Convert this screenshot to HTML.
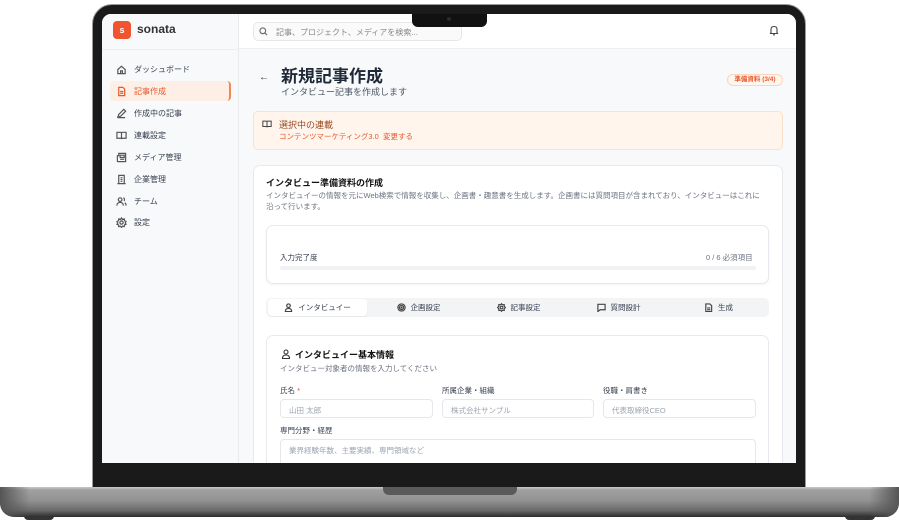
<!DOCTYPE html>
<html><head><meta charset="utf-8"><style>
*{box-sizing:border-box;margin:0;padding:0}
body{width:899px;height:525px;background:#fff;position:relative;overflow:hidden;font-family:"Liberation Sans","Noto Sans CJK JP",sans-serif;color:#1f2937}
.abs{position:absolute}
.frame{left:92px;top:4px;width:714px;height:486px;background:#1a1a1a;border-radius:20px 20px 0 0;border:1px solid #9a9a9a}
.screen{left:102px;top:14px;width:694px;height:449px;background:#f8f9fb;overflow:hidden;border-radius:9px 9px 0 0}
.notch{left:412px;top:14px;width:75px;height:13px;background:#111;border-radius:0 0 6px 6px;z-index:5}
.base{left:0;top:487px;width:899px;height:30px;border-radius:2px 2px 14px 14px;background:linear-gradient(#c9c9c9 0,#a0a0a0 3px,#929292 45%,#6a6a6a 78%,#2d2d2d 100%)}
.base:before{content:"";position:absolute;left:0;top:0;width:30px;height:30px;border-radius:0 0 0 14px;background:linear-gradient(90deg,#555,rgba(0,0,0,0))}
.base:after{content:"";position:absolute;right:0;top:0;width:30px;height:30px;border-radius:0 0 14px 0;background:linear-gradient(270deg,#555,rgba(0,0,0,0))}
.lip{left:383px;top:487px;width:134px;height:8px;background:#5a5a5a;border-radius:0 0 6px 6px}
.foot{top:516px;width:30px;height:4px;background:#333;border-radius:0 0 4px 4px}
.side{left:0;top:0;width:137px;height:449px;background:#f8f9fb;border-right:1px solid #e8eaee}
.hdr{left:137px;top:0;width:557px;height:35px;background:#fff;border-bottom:1px solid #eceef1}
.nav{position:absolute;left:14px;font-size:8px;color:#374151;display:flex;align-items:center;gap:7px}
.nav svg{width:11px;height:11px;stroke:#555;fill:none;stroke-width:1.3}
.card{background:#fff;border:1px solid #e7e9ed;border-radius:7px;position:absolute}
.in{position:absolute;height:19px;border:1px solid #e5e7eb;border-radius:4px;background:#fff;font-size:7.5px;color:#9ca3af;padding:5px 8px}
.lbl{position:absolute;font-size:7.5px;color:#374151}
.tab{position:absolute;top:0;height:18px;font-size:7.5px;color:#374151;display:flex;align-items:center;justify-content:center;gap:5px}
.tab svg{width:9px;height:9px;stroke:#444;fill:none;stroke-width:1.3}
</style></head><body>
<div class="abs frame"></div>
<div class="abs screen">
  <div class="abs side">
    <div class="abs" style="left:11px;top:7px;width:18px;height:18px;border-radius:4px;background:#f0552f;color:#fff;font-size:9px;font-weight:bold;text-align:center;line-height:18px">s</div>
    <div class="abs" style="left:35px;top:8px;font-size:12px;font-weight:bold;color:#333">sonata</div>
    <div class="abs" style="left:0;top:35px;width:137px;border-top:1px solid #eceef1"></div>
    <div class="abs" style="left:8px;top:67px;width:121px;height:20px;background:#fdeee6;border-radius:4px;border-right:2px solid #f0884f"></div>
    <div class="nav" style="top:50px"><svg viewBox="0 0 12 12"><path d="M2 6L6 2.5 10 6V10.5H2Z M5 10.5V7.5H7V10.5"/></svg>ダッシュボード</div>
    <div class="nav" style="top:72px;color:#e8572a"><svg viewBox="0 0 12 12" style="stroke:#e8572a"><path d="M3 1.5H7.5L9.5 3.5V10.5H3Z M4.5 6H8 M4.5 8H8"/></svg>記事作成</div>
    <div class="nav" style="top:94px"><svg viewBox="0 0 12 12"><path d="M2 10L3 7 8.5 1.5 10.5 3.5 5 9Z M2 10.5H10"/></svg>作成中の記事</div>
    <div class="nav" style="top:116px"><svg viewBox="0 0 12 12"><path d="M1 2.5H5Q6 2.5 6 3.5V10Q6 9 5 9H1Z M11 2.5H7Q6 2.5 6 3.5V10Q6 9 7 9H11Z"/></svg>連載設定</div>
    <div class="nav" style="top:138px"><svg viewBox="0 0 12 12"><path d="M3 1.5H10.5V10.5H2Q1.5 10.5 1.5 9.5V4H3Z M4.5 3.5H9 V6H4.5Z M4.5 8H9"/></svg>メディア管理</div>
    <div class="nav" style="top:160px"><svg viewBox="0 0 12 12"><path d="M3 10.5V1.5H9V10.5Z M1.5 10.5H10.5 M5 4H7 M5 6H7 M5 8H7"/></svg>企業管理</div>
    <div class="nav" style="top:182px"><svg viewBox="0 0 12 12"><circle cx="4.5" cy="4" r="2"/><path d="M1 10.5Q1 7 4.5 7 8 7 8 10.5 M8 2Q9.8 2.5 9 5.5 M9.5 7.5Q11 8 11 10.5"/></svg>チーム</div>
    <div class="nav" style="top:203px"><svg viewBox="0 0 12 12"><circle cx="6" cy="6" r="1.8"/><path d="M6 1L7 2.5 9 2 9.3 4 11 5 10 6.5 11 8 9.3 8.5 9 10.5 7 10 6 11.5 5 10 3 10.5 2.7 8.5 1 8 2 6.5 1 5 2.7 4 3 2 5 2.5Z"/></svg>設定</div>
  </div>
  <div class="abs hdr">
    <div class="abs" style="left:14px;top:8px;width:209px;height:19px;border:1px solid #e5e7eb;border-radius:5px;background:#fafafa;font-size:8px;color:#888;padding:4px 0 0 22px">記事、プロジェクト、メディアを検索...</div>
    <svg class="abs" style="left:20px;top:13px" width="9" height="9" viewBox="0 0 10 10" fill="none" stroke="#666" stroke-width="1.2"><circle cx="4.2" cy="4.2" r="3.2"/><path d="M6.6 6.6L9 9"/></svg>
    <svg class="abs" style="left:530px;top:11px" width="10" height="11" viewBox="0 0 10 11" fill="none" stroke="#444" stroke-width="1.1"><path d="M2 8V4.5Q2 1.5 5 1.5 8 1.5 8 4.5V8L9 8.5H1Z M4 9.8H6"/></svg>
  </div>
  <div class="abs" style="left:157px;top:58px;font-size:10px;color:#333">←</div>
  <div class="abs" style="left:179px;top:48px;font-size:17px;font-weight:bold;color:#1f2937">新規記事作成</div>
  <div class="abs" style="left:179px;top:71px;font-size:9px;color:#4b5563">インタビュー記事を作成します</div>
  <div class="abs" style="left:625px;top:60px;width:56px;height:12px;border:1px solid #fbd5bd;border-radius:7px;background:#fff6f0;font-size:6.5px;color:#e8572a;font-weight:bold;text-align:center;line-height:10px">準備資料 (3/4)</div>
  <div class="abs" style="left:151px;top:97px;width:530px;height:39px;background:#fff5ec;border:1px solid #fbe1c8;border-radius:5px"></div>
  <svg class="abs" style="left:160px;top:105px" width="10" height="10" viewBox="0 0 12 12" fill="none" stroke="#444" stroke-width="1.2"><path d="M1 2.5H5Q6 2.5 6 3.5V10Q6 9 5 9H1Z M11 2.5H7Q6 2.5 6 3.5V10Q6 9 7 9H11Z"/></svg>
  <div class="abs" style="left:177px;top:104px;font-size:9px;color:#9a4a22">選択中の連載</div>
  <div class="abs" style="left:177px;top:117px;font-size:7.5px;color:#e8572a">コンテンツマーケティング3.0&nbsp;&nbsp;変更する</div>
  <div class="card" style="left:151px;top:151px;width:530px;height:320px"></div>
  <div class="abs" style="left:164px;top:162px;font-size:9px;font-weight:bold;color:#111">インタビュー準備資料の作成</div>
  <div class="abs" style="left:164px;top:176px;width:496px;font-size:7.5px;line-height:11px;color:#6b7280">インタビュイーの情報を元にWeb検索で情報を収集し、企画書・趣意書を生成します。企画書には質問項目が含まれており、インタビューはこれに<br>沿って行います。</div>
  <div class="card" style="left:164px;top:211px;width:503px;height:59px;box-shadow:0 1px 2px rgba(0,0,0,.05)"></div>
  <div class="abs" style="left:178px;top:238px;font-size:7.5px;color:#374151">入力完了度</div>
  <div class="abs" style="left:604px;top:238px;font-size:7.5px;color:#6b7280">0 / 6 必須項目</div>
  <div class="abs" style="left:178px;top:252px;width:476px;height:4px;border-radius:2px;background:#f1f2f4"></div>
  <div class="abs" style="left:164px;top:284px;width:503px;height:19px;background:#f3f4f6;border-radius:5px">
    <div class="abs" style="left:2px;top:1px;width:99px;height:17px;background:#fff;border-radius:4px;box-shadow:0 1px 1px rgba(0,0,0,.06)"></div>
    <div class="tab" style="left:2px;width:99px"><svg viewBox="0 0 10 10"><circle cx="5" cy="3" r="2"/><path d="M1.5 9.5Q1.5 6 5 6 8.5 6 8.5 9.5Z"/></svg>インタビュイー</div>
    <div class="tab" style="left:103px;width:99px"><svg viewBox="0 0 10 10"><circle cx="5" cy="5" r="4"/><circle cx="5" cy="5" r="2.3"/><circle cx="5" cy="5" r=".6"/></svg>企画設定</div>
    <div class="tab" style="left:203px;width:99px"><svg viewBox="0 0 10 10"><circle cx="5" cy="5" r="1.5"/><path d="M5 .8L6 2 8 1.7 8 3.7 9.3 5 8 6.3 8 8.3 6 8 5 9.2 4 8 2 8.3 2 6.3.7 5 2 3.7 2 1.7 4 2Z"/></svg>記事設定</div>
    <div class="tab" style="left:303px;width:99px"><svg viewBox="0 0 10 10"><path d="M1 1.5H9V7.5H3.5L1 9.5Z"/></svg>質問設計</div>
    <div class="tab" style="left:403px;width:99px"><svg viewBox="0 0 10 10"><path d="M2 1H6.5L8.5 3V9.5H2Z M3.5 5.5H7 M3.5 7.5H7"/></svg>生成</div>
  </div>
  <div class="card" style="left:164px;top:321px;width:503px;height:140px"></div>
  <svg class="abs" style="left:179px;top:335px" width="10" height="10" viewBox="0 0 10 10" fill="none" stroke="#333" stroke-width="1.1"><circle cx="5" cy="3" r="2"/><path d="M1.5 9.5Q1.5 6 5 6 8.5 6 8.5 9.5Z"/></svg>
  <div class="abs" style="left:193px;top:334px;font-size:9px;font-weight:bold;color:#111">インタビュイー基本情報</div>
  <div class="abs" style="left:178px;top:349px;font-size:7.5px;color:#6b7280">インタビュー対象者の情報を入力してください</div>
  <div class="lbl" style="left:178px;top:371px">氏名 <span style="color:#ef4444">*</span></div>
  <div class="lbl" style="left:340px;top:371px">所属企業・組織</div>
  <div class="lbl" style="left:501px;top:371px">役職・肩書き</div>
  <div class="in" style="left:178px;top:385px;width:153px">山田 太郎</div>
  <div class="in" style="left:340px;top:385px;width:152px">株式会社サンプル</div>
  <div class="in" style="left:501px;top:385px;width:153px">代表取締役CEO</div>
  <div class="lbl" style="left:178px;top:411px">専門分野・経歴</div>
  <div class="in" style="left:178px;top:425px;width:476px;height:30px">業界経験年数、主要実績、専門領域など</div>
</div>
<div class="abs notch"><div style="position:absolute;left:35px;top:3px;width:4px;height:4px;border-radius:50%;background:#2a2a2a"></div></div>
<div class="abs base"></div>
<div class="abs lip"></div>
<div class="abs foot" style="left:24px"></div>
<div class="abs foot" style="left:845px"></div>
</body></html>
